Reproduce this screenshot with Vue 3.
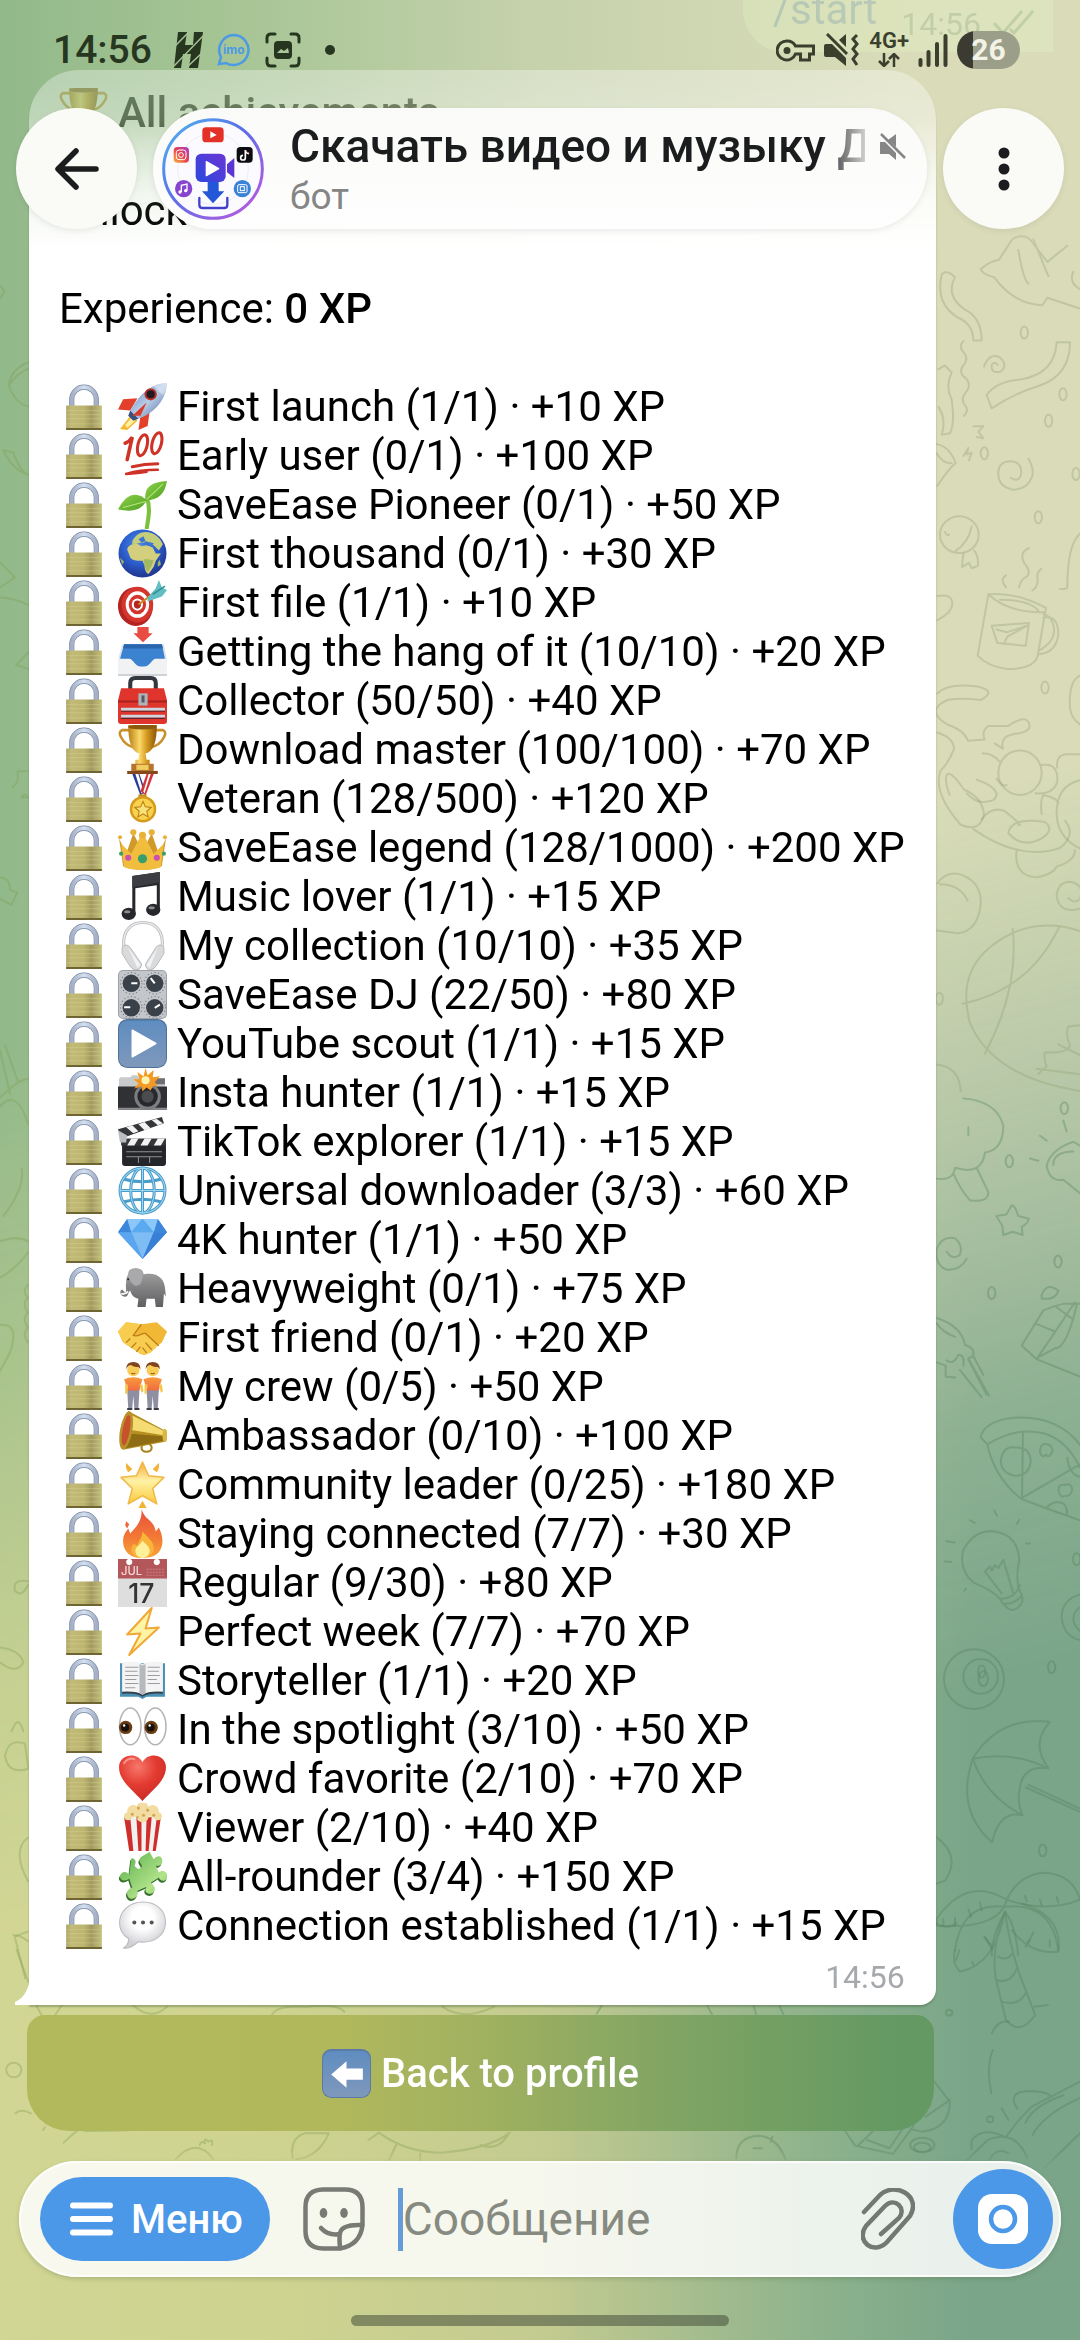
<template>
  <div class="screen">
    <div class="wallpaper" aria-hidden="true">
      <svg class="wallpaper__doodles" viewBox="0 0 1080 2340" preserveAspectRatio="xMaxYMin slice">
        <!-- right edge, upper part -->
        <g class="doodle doodle--light" transform="translate(900 250) scale(.3333 .5422)">
          <path d="M242 35q30-15 55-17l40-38q40-15 65 10l40 32 60-30M242 35q5 10 40 15 60 50 145 52l15-14 98 20M355 0q15 55 30 62M400-20l45 68M520 40q-15 20 20 32" />
          <path d="M125 45q15-10 40 5-30 35 30 60 50 15 50 57h-25q0-30-45-42-70-25-50-80z" />
          <path d="M190 168q-15 10 0 20 18 12 0 25t10 25q15 12-3 25t0 25q10 8-5 18" />
          <path d="M252 215q15-25 45-18 30 15 5 27-30 5-27-12 8-8 18 0" />
          <path d="M470 170h40q0 60-90 80-80 15-145 42l-15-25q30-25 100-28 105-10 110-69z" />
          <path d="M115 220l20-7 20 13q-20 25 0 50 10 45-5 62l-25 3q15-30-10-52" />
          <path d="M220 325l30 0-15 10 15 12-20-2M190 380l15-15-5 12 15-3-8 14" />
          <path d="M110 358q40 5 57 35-20 10-55 42M110 375q20 20 45 18" />
          <path d="M385 385q20 20 10 35-15 22-55 22-45-5-45-30t45-22q30 5 22 27-10 12-30 3" />
          <ellipse cx="178" cy="525" rx="58" ry="34" />
          <path d="M215 510q-10 30-48 45M190 560l-4 25 20-8 10 10 18-5q2-18-12-28M135 520q5 8 12 5" />
          <path d="M265 635q80-5 173 25l-25 88q-10 25-90 25-60-5-90-25zM265 635q60 35 170 33M300 645q90 0 115 20M430 678q45-5 45 30-5 35-62 38M430 672q25 2 32 25 5 25-45 42M275 693l112-5-10 42-85-5z M290 700l30 5 62-12-60 20-10 14" />
          <path d="M318 622q-20-15 0-22M357 622q5-15 25-20 12-10-10-25-15-20 15-27M397 628q20-8 15-25 0-10 12-15" />
          <path d="M112 818q30-20 120-13 60 8 10 25-60-5-100 0-70 20 0 45 50 10 62 30l50-2q-10-15 10-25h60q60-25 65 0 0 12-50 15-40 5-30 27l-25-10M112 890q50 10 50 30-15 25-40 40-25 40 60 100 60 15 70-20-5-30-60-45-45-40-53-25-5 10 10 35" />
          <ellipse cx="360" cy="964" rx="65" ry="41" />
          <path d="M248 928q30 0 50 15M290 975q15 15 30 12M425 950q50-5 47 30-10 25-65 22M472 955q-5-25 30-25h38M200 1002q30 20 60 15 30 0 30-15-10-15-60-25M245 1050q30-25 70-15 60 30 40 25M220 1068q140 60 260 35 50-25 15-50M325 1075q10-30 110-20 30 15-10 30-60 20-100-10M350 1105q-10 50 60 52 50-5 60-20 55-10 55-30" />
          <path d="M540 978q-70 10-70 60 0 45 70 66M425 1040q-5-25 5-35 40 5 45 15" />
          <path d="M112 1168q30-25 75-15 60 15 55 55-10 50-70 52l-62-5M120 1170q60 0 83 30" />
          <path d="M540 1215q-65 10-70-25 5-25 40-25 45 5 30 32-20 10-35-2" />
          <path d="M540 1256q-150-30-270 30-100 50-60 140 70 100 330 125M338 1252q20 110-83 230M188 1390q200-25 290-142M540 1430l-35 2q-10 15 5 35-5 15-75 13-5 10 5 25l-25 15M475 1465l65 20M410 1510l130 10" />
          <path d="M110 1502q70 5 72 50M480 625q10 2 22-2 0-80 38-100M112 638q45-5 45 15 0 15-45 30M540 785q-35 10-30 60 5 20 30 30" />
          <circle v-for="[x, y] in upperDots" :key="x + '-' + y" :cx="x" :cy="y" r="11" />
        </g>
        <!-- right edge, lower part -->
        <g class="doodle" transform="translate(900 1100) scale(.3333 .5422)">
          <path d="M110 145q50 5 55-20 80 15 90-28 55-5 55-50-20-45-120-50M160 135q20 30 50 50 55 5 55-15l-35-45M205 50v15" />
          <path d="M335 194q10 0 20 20l32 5q-5 10-22 15l3 15-30-6-28 6-3-17-18-18 30-3z" />
          <path d="M200 293q-20 22-60 20-35-8-30-38 15-25 55-20 25 12 15 30-20 12-40-5" />
          <path d="M110 402q75 15 85 50 30 5 25 20l-15 5 62 68M110 412q15 15 55 25M220 472l30 35M205 478l55 65M180 498l65 50M165 512l-28-2v-20l-27-6M140 480q20 10 35-10 20 0 15 20" />
          <path d="M540 172l-50-25q-40 5-50-25 10-30 80-45l20 7M460 120q0-25 60-25M490 38l10 20M420 66l20 9M390 108l25 4" />
          <path d="M430 388l-65 65 45 25 130 32M410 478l55-50 60-55M430 388q30-8 60-12h50M465 380l55 25M405 412l60 15M530 378q-30 80-65 80l-55 18M425 360q15-25 50-8-10 18-50 14z" />
          <path d="M242 622q10-30 100-36 130-5 198 50M262 635l-20-13M262 635q80-30 150-22 80 5 128 65M262 635q20 60 100 100 60 15 178 40M369 612l-3 122 174-62M302 667q5-30 45-26 45 0 45 26-5 26-45 26-40-3-45-26zM502 660q5 30 38 35M440 752q20-15 50-8 15 10 10 22" />
          <path d="M420 650q0-18 20-15 15 0 18 12-10 15-20 7-10 8-18-4zM475 720q0-12 20-10 20-5 22 10-8 12-22 10-15 5-20-10z" />
          <path d="M300 920q-20-15-80-30-45-25-30-60 30-35 85-35 80 5 83 55-10 20-3 50 20 20 8 30-30 25-63-10zM300 920q45 0 60-25M306 928q35 5 60-15M305 910l-50-40 15-10 5 8 10-10 10 5 15-15 30 62" />
          <path d="M210 775l14 5M283 757l8 10M358 774l-8 8M378 818h12M138 814l26 2M134 851l20 1M193 905l5-4" />
          <ellipse cx="222" cy="1068" rx="90" ry="55" />
          <ellipse cx="242" cy="1063" rx="52" ry="32" />
          <circle cx="245" cy="1054" r="11" />
          <circle cx="250" cy="1067" r="14" />
          <path d="M540 912q-55 10-55 42 5 35 55 42M540 935q-40 20 0 45" />
          <path d="M218 1215q80-80 232-68-60 40-5 85-75-5-85 35-10 30 8 52-70-10-92 50-110-60-58-154M218 1215q120-15 227 18M218 1215q40 70 150 104M378 1268l162 45M386 1263l154 44" />
          <path d="M110 1360q75 35 25 80l-25 5" />
          <path d="M110 1510q90-80 210-35-20 55-210 48zM320 1475q40-50 120-50 80 5 100 50-100 25-220 0M165 1568q20-90 150-80 140-10 160 80M315 1498q-40 40-40 80M315 1498q30 20 40 80" />
          <path d="M130 1510v12M165 1508v14M205 1492l8 14M240 1480l5 15M375 1468l5 10M420 1475l5 10M470 1470l5 10M255 1545l20 20M400 1535l-15 20" />
          <circle v-for="[x, y] in lowerDots" :key="x + '-' + y" :cx="x" :cy="y" r="11" />
        </g>
        <!-- palm, kite and small things around the button -->
        <g class="doodle" transform="translate(540 1900) scale(.3444 .3333)">
          <path d="M1350 35q-40 100-27 200l30 125q40 50 85-15l-30-80q-40-100-58-230M1330 170q25 15 42-10M1325 240q40 15 60-35M1340 305q50 15 70-25M1150 70q30 20 60 0M1205 150q-10 40 15 65 100-20 130-180M1400 10q120 40 105 145-80 10-135-65M1218 150l-10 30M1255 185l5 15M1290 110l20 25M1420 120l-10 20M1480 120v20M1435 320l40-5" />
          <path d="M1312 400q15-40 50-35M1315 450q-20 50-5 130M1340 625l20 35" />
          <path d="M1145 545l45 60q0 80-80 90l-35-8M1190 600l-70 50M885 692l30 45 110 25 60-85M925 735l45-45M950 720l65 25 45-70" />
          <ellipse cx="1110" cy="735" rx="35" ry="22" />
          <ellipse cx="1110" cy="742" rx="24" ry="14" />
          <path d="M570 775q0-65 65-68 55 5 78 72M620 745h25M675 710l-5 15" />
          <path d="M1568 545l-140 75q-50 50-75 92-70-35-100 10v25M1385 625q-30-50 35-52 40 0 60 12M1410 668q20-50 110-82M1430 705q30-60 135-110M1240 780l60-60q80-35 115 55M1305 780q20-40 55-20M1568 700l-110 110" />
          <circle cx="1188" cy="338" r="9" />
          <circle cx="1307" cy="658" r="9" />
          <path d="M165 340q10-15 15-25M500 345l-15-30M620 315l8 30M695 315l12 30" />
        </g>
        <g class="doodle doodle--warm" transform="translate(0 1900) scale(.3444 .3333)">
          <path d="M80 95l-37 15 30 125M105 315l15 30M180 315l-20 30M385 315q55 50 100 5M790 345q10-30 100-25 90-10 110 15M1285 320q60 45 150 0M45 640q15-15 45 0M185 728q60-60 60-35 60 0 130-2M125 690l5-8M510 778q60-70 110 0M580 735q5-15 15-5-5-20 10-5 15-10 10 10M850 775q-10-60 35-75h70q-30 70-95 78M1070 720l30-22q80 60 180 60 140-10 200-60M1150 735l-20 45M1220 760v20M1395 735q50 20 80-30" />
          <circle cx="40" cy="510" r="22" />
        </g>
        <!-- left edge -->
        <g class="doodle doodle--warm" transform="translate(0 200) scale(.3333 1.25)">
          <path d="M0 68l14 5-14 6M84 130q-50 5-58 18 20 15 58 17M84 135q-40 5-56 13M10 200l30 2q20 15 44 18-50-5-74-20M0 290l45 12-45 8M0 318q40 0 84 6M84 362l-35 10 35 3M38 470l15-5v-8h30M84 478q-10-5-20 0zM0 542q30 0 30 10l22 2-18 10-34-5M0 680l30 35M15 676l40 30M0 718q60-15 84-15M0 725q50-15 84 14M65 775q10 15-55 38M0 833q50-5 84 0M0 862q40-5 84-20M0 900q60-2 30 22l-30 15M84 868q-20 5 0 10-20 5 0 12-20 5 0 12-20 5 0 12M84 1105q-50-2-38 8 20 5 38-5M0 1158q60 2 70 12-20 10-70 0M15 1245q10-15 60-10l10 20q-60 5-70-10zM35 1225q20-15 35 0M84 1310q-50 10 0 35M40 1388q20 0 44 5M50 1400l34 25" />
        </g>
      </svg>
    </div>

    <svg class="sprites" aria-hidden="true">
      <defs>
        <linearGradient id="g-brass" x1="0" x2="1"><stop offset="0" stop-color="#aea567" /><stop offset=".15" stop-color="#c2bb78" /><stop offset=".5" stop-color="#bcb570" /><stop offset=".7" stop-color="#a09a60" /><stop offset="1" stop-color="#c6c07c" /></linearGradient>
        <linearGradient id="g-steel" x1="0" x2="1"><stop offset="0" stop-color="#a3b0c6" /><stop offset=".5" stop-color="#d5e0f2" /><stop offset="1" stop-color="#a3b0c6" /></linearGradient>
        <linearGradient id="g-gold" x1="0" x2="1"><stop offset="0" stop-color="#b97f14" /><stop offset=".4" stop-color="#fbd86a" /><stop offset=".65" stop-color="#d59a1f" /><stop offset="1" stop-color="#8a5509" /></linearGradient>
        <linearGradient id="g-blue" x1="0" y1="0" x2="0" y2="1"><stop offset="0" stop-color="#5f8dc0" /><stop offset="1" stop-color="#7f98bb" /></linearGradient>
        <linearGradient id="g-star" x1="0" y1="0" x2="0" y2="1"><stop offset="0" stop-color="#f4ab3d" /><stop offset=".45" stop-color="#fff2a6" /><stop offset="1" stop-color="#fbcb3c" /></linearGradient>
        <linearGradient id="g-fire" x1="0" y1="0" x2="0" y2="1"><stop offset="0" stop-color="#e8503a" /><stop offset=".6" stop-color="#f37b35" /><stop offset="1" stop-color="#f6a53a" /></linearGradient>
        <linearGradient id="g-leaf" x1="0" y1="0" x2="1" y2="1"><stop offset="0" stop-color="#8fd447" /><stop offset="1" stop-color="#4f9d26" /></linearGradient>
        <linearGradient id="g-puzzle" x1="0" y1="0" x2="1" y2="1"><stop offset="0" stop-color="#58b04b" /><stop offset=".7" stop-color="#b3e38a" /><stop offset="1" stop-color="#7cc263" /></linearGradient>
        <linearGradient id="g-shirt" x1="0" y1="0" x2="0" y2="1"><stop offset="0" stop-color="#f79a3c" /><stop offset="1" stop-color="#f06b40" /></linearGradient>
        <linearGradient id="g-hull" x1="0" y1="0" x2="1" y2="1"><stop offset="0" stop-color="#5b7fb8" /><stop offset=".5" stop-color="#b9cde8" /><stop offset="1" stop-color="#46649a" /></linearGradient>
        <linearGradient id="g-grey" x1="0" y1="0" x2="0" y2="1"><stop offset="0" stop-color="#a3a3a3" /><stop offset="1" stop-color="#5f5f62" /></linearGradient>
        <radialGradient id="g-ocean" cx=".45" cy=".35" r=".6"><stop offset="0" stop-color="#4d8de6" /><stop offset=".6" stop-color="#2c5fce" /><stop offset="1" stop-color="#223b98" /></radialGradient>
        <radialGradient id="g-bubble" cx=".5" cy=".35" r=".6"><stop offset=".4" stop-color="#fff" /><stop offset="1" stop-color="#cfcfd4" /></radialGradient>
        <radialGradient id="g-heart" cx=".4" cy=".25" r=".8"><stop offset="0" stop-color="#f7776b" /><stop offset=".5" stop-color="#e33b31" /><stop offset="1" stop-color="#c42a24" /></radialGradient>
        <linearGradient id="g-ring" x1="0" y1="0" x2="1" y2="1"><stop offset="0" stop-color="#4fb8f0" /><stop offset=".45" stop-color="#5a6fe8" /><stop offset="1" stop-color="#c656dd" /></linearGradient>
        <linearGradient id="g-cam" x1="0" y1="1" x2="1" y2="0"><stop offset="0" stop-color="#2a49dd" /><stop offset="1" stop-color="#6b35d6" /></linearGradient>
        <linearGradient id="g-insta" x1="0" y1="1" x2="1" y2="0"><stop offset="0" stop-color="#fbb13c" /><stop offset=".5" stop-color="#e8414e" /><stop offset="1" stop-color="#a63bd0" /></linearGradient>
      </defs>

      <symbol id="e-lock" viewBox="0 0 48 48">
        <path d="M12.500 26V17a12 12 0 0 1 24 0v9" fill="none" stroke="#76849c" stroke-width="5" />
        <path d="M12.500 26V17a12 12 0 0 1 24 0v9" fill="none" stroke="url(#g-steel)" stroke-width="3.800" />
        <path d="M7 23h35v23.500H7z" fill="url(#g-brass)" />
        <path d="M7 28h35M7 32h35M7 36h35M7 41h35" stroke="#d9cf8d" stroke-width=".6" opacity=".7" />
        <path d="M7 45h35v2H7z" fill="#6e6532" />
      </symbol>
      <symbol id="e-rocket" viewBox="0 0 48 48">
        <path d="M19 16 5 17 0 27l12 1zM31 29l-2 14-9 4 2-14z" fill="#e3402c" />
        <path d="M13 32 2 46l7 1 10-9z" fill="#f6b72e" /><path d="M13 35 7 42l2 3 8-7z" fill="#fff1a0" />
        <path d="M48 1C34 1 22 10 12 28l8 8C36 30 47 18 48 1z" fill="url(#g-hull)" />
        <path d="m12 28 8 8-5 2-5-5z" fill="#39517f" /><path d="M48 1c-5 0-9 1-13 3l9 9c3-4 4-8 4-12z" fill="#e8eef6" opacity=".55" />
        <circle cx="32" cy="12" r="6" fill="#b53028" /><circle cx="32" cy="12" r="4" fill="#1e1c22" />
        <path d="m14 33 14-13-6 13z" fill="#d73b2a" />
      </symbol>
      <symbol id="e-hundred" viewBox="0 0 48 48">
        <g fill="none" stroke="#cf3227" stroke-linecap="round">
          <path d="M7 12c3-1 5-3 7-6L9 28" stroke-width="3.500" /><ellipse cx="24" cy="14" rx="4.500" ry="10.500" transform="rotate(14 24 14)" stroke-width="3" />
          <ellipse cx="38" cy="12" rx="4.500" ry="10.500" transform="rotate(14 38 12)" stroke-width="3" />
          <path d="M14 35c8-2 16-3 25-3" stroke-width="3" /><path d="M8 42c10-3 20-4 31-4M8 42c6 0 13-1 20-2" stroke-width="2.500" />
        </g>
      </symbol>
      <symbol id="e-sprout" viewBox="0 0 48 48">
        <path d="M28 17c4 9 2 20 0 31" fill="none" stroke="#7cc13d" stroke-width="4" />
        <path d="M27 20C25 6 34 2 48 1c-2 12-8 19-21 19z" fill="url(#g-leaf)" /><path d="M28 20C20 11 8 12 0 29c12 2 22 2 28-9z" fill="url(#g-leaf)" />
        <path d="M28 19 44 4M27 21 5 27" stroke="#b6e67c" stroke-width="1" />
      </symbol>
      <symbol id="e-globe" viewBox="0 0 48 48">
        <circle cx="24" cy="24" r="23.500" fill="url(#g-ocean)" />
        <path d="M9 20c1-4 5-6 11-5l3 2 5-1 6 2 3 6 5 0-5 7-2 6-5 7c-3-1-4-5-4-8l-2-5c-4 0-9 1-12-3z" fill="#d3cf7c" />
        <path d="M14 12c3-6 8-9 13-9 8 0 14 5 17 12l-4 6-5-5-5-1-6-2-4 1-6 2z" fill="#c4cd79" /><path d="M20 10l5-3 2 5-4 1zM27 12l8 2-2 3-9-2z" fill="#3d74d4" />
        <path d="M39 33l2-3 1 5-3 2zM2 28l4 4-2 3z" fill="#9eb766" />
        <path d="M25 30c4-1 7 1 10 0l-2 6-4 6c-2-2-3-6-4-12z" fill="#8fae58" opacity=".7" />
      </symbol>
      <symbol id="e-dart" viewBox="0 0 48 48">
        <ellipse cx="17" cy="28" rx="17" ry="19" fill="#b42420" transform="rotate(-8 17 28)" />
        <ellipse cx="19" cy="26" rx="15.500" ry="17.500" fill="#d5352c" /><ellipse cx="19" cy="26" rx="11.500" ry="13" fill="#fff" />
        <ellipse cx="19" cy="26" rx="8.500" ry="9.500" fill="#d5352c" /><ellipse cx="19" cy="26" rx="5.500" ry="6" fill="#fff" /><ellipse cx="19" cy="26" rx="3.500" ry="4" fill="#b42420" />
        <path d="M20 26 38 13" stroke="#c98a20" stroke-width="2" /><path d="m29 19 8-9 3-8 3 7 5 3-5 6-14 5z" fill="#62bec2" /><path d="M34 16 46 8" stroke="#2f8e98" stroke-width="1.500" />
      </symbol>
      <symbol id="e-inbox" viewBox="0 0 48 48">
        <path d="M19 0h11v6h4L24.500 15 15 6h4z" fill="#e84c43" /><path d="M4 17h41l3 15v16H0V32z" fill="#dfe4ea" /><path d="M6 17h37l3 14-8 2-6 6H17l-6-6-9-2z" fill="#3b82d0" />
        <path d="M6 17h37l1 4H5z" fill="#2a66ad" /><path d="M0 31h11c4 0 5 8 13 8s9-8 13-8h11v17H0z" fill="#f1f2f4" /><path d="M0 46h48v2H0z" fill="#cfd3d8" />
      </symbol>
      <symbol id="e-toolbox" viewBox="0 0 48 48">
        <path d="M12 13V7q0-5 5-5h15q5 0 5 5v6" fill="none" stroke="#34383f" stroke-width="4" /><path d="M3 12h42l3 12v20q0 3-3 3H3q-3 0-3-3V24z" fill="#df352d" />
        <path d="M0 24h48v2H0z" fill="#a7211d" /><path d="M3 31h43v3H3zM3 38h43v3H3z" fill="#cfd5dc" /><path d="M3 34h43v1H3zM3 41h43v1H3z" fill="#60252a" /><path d="M20 17h9v12h-9z" fill="#aeb4ba" /><path d="M23 19h3v7h-3z" fill="#555b62" />
      </symbol>
      <symbol id="e-trophy" viewBox="0 0 48 48">
        <path d="M12 5H4q-4 2-1 7 4 8 13 10M36 5h8q4 2 1 7-4 8-13 10" fill="none" stroke="#c7902a" stroke-width="2.500" />
        <path d="M10 0h28c0 16-3 26-11 28l1 6h3v5H17v-5h3l1-6C13 26 10 16 10 0z" fill="url(#g-gold)" /><ellipse cx="24" cy="2" rx="14" ry="2.500" fill="#8b5a0e" />
        <path d="M13 38h22v7H13z" fill="#b8742c" /><path d="M9 45h30v3H9z" fill="#84481a" /><path d="M18 39h12v5H18z" fill="#f1cd60" />
      </symbol>
      <symbol id="e-medal" viewBox="0 0 48 48">
        <path d="M14 0h7l6 17-5 4z" fill="#2b3c96" /><path d="M17 0h3l5 17-2 2z" fill="#fff" /><path d="M35 0h-7l-6 17 5 4z" fill="#d2333b" /><path d="M32 0h-2l-5 17 1 2z" fill="#fff" />
        <path d="M20 20h8v4h-8z" fill="#c98d1a" /><circle cx="24.500" cy="34.500" r="13" fill="#d59b1d" /><circle cx="24.500" cy="34.500" r="10.500" fill="#f8d14d" />
        <path d="m24.500 27 2.300 5.200 5.700.5-4.300 3.800 1.300 5.500-5-2.900-5 2.900 1.300-5.500-4.300-3.800 5.700-.5z" fill="#fae27a" stroke="#b67b12" />
      </symbol>
      <symbol id="e-crown" viewBox="0 0 48 48">
        <path d="M1 15l7 15 7-20 9 18 9-18 7 20 7-15-4 27c-8 5-31 5-38 0z" fill="#d09a2b" /><path d="M3 20l10 10 11-21 11 21 10-10-3 23c-8 4-29 4-36 0z" fill="#f0bd3d" />
        <g fill="#e8b23a"><circle cx="15" cy="9" r="3" /><circle cx="33" cy="9" r="3" /><circle cx="2" cy="14" r="2" /><circle cx="46" cy="14" r="2" /><circle cx="24" cy="12" r="3.500" /></g>
        <circle cx="24" cy="35" r="4.500" fill="#35a06c" /><circle cx="10" cy="34" r="3" fill="#cf4fb0" /><circle cx="38" cy="34" r="3" fill="#cf4fb0" /><circle cx="3" cy="30" r="2" fill="#35a06c" /><circle cx="45" cy="30" r="2" fill="#35a06c" />
      </symbol>
      <symbol id="e-notes" viewBox="0 0 48 48">
        <path d="M14 4 41 0v38h-3V13l-21 3v26h-3z" fill="#26282c" /><path d="M14 4 41 0v10L14 15z" fill="#3b3d42" /><ellipse cx="10.500" cy="41" rx="7" ry="6" fill="#26282c" /><ellipse cx="34.500" cy="37" rx="7" ry="6" fill="#26282c" />
        <ellipse cx="9" cy="39" rx="3" ry="1.500" fill="#8b8e95" /><ellipse cx="33" cy="35" rx="3" ry="1.500" fill="#8b8e95" />
      </symbol>
      <symbol id="e-headphones" viewBox="0 0 48 48">
        <path d="M6 28C3 8 14 1.500 24.500 1.500S46 8 43 28" fill="none" stroke="#b9babd" stroke-width="3" /><path d="M6 28C3 8 14 1.500 24.500 1.500S46 8 43 28" fill="none" stroke="#e8e9eb" stroke-width="1.500" />
        <path d="M4 26q4-5 8 0l11 16q0 6-6 6-4-1-6-5L4 32z" fill="#d9dadc" stroke="#b0b1b4" stroke-width=".8" /><path d="M45 26q-4-5-8 0L27 42q0 6 5 6 4-1 6-5l7-11z" fill="#d9dadc" stroke="#b0b1b4" stroke-width=".8" /><path d="m10 26 12 17-3 3zM39 26 28 43l3 3z" fill="#f3f3f4" />
      </symbol>
      <symbol id="e-knobs" viewBox="0 0 48 48">
        <rect width="48" height="48" rx="5" fill="#9da1a7" /><rect x="1" y="1" width="46" height="46" rx="4" fill="#c3c6ca" />
        <g fill="none" stroke="#6d7177" stroke-width="1" stroke-dasharray="1 2.500"><circle cx="13" cy="13" r="10.500" /><circle cx="36" cy="13" r="10.500" /><circle cx="13" cy="36.500" r="10.500" /><circle cx="36" cy="36.500" r="10.500" /></g>
        <g fill="#3b4148"><circle cx="13" cy="13" r="8.500" /><circle cx="36" cy="13" r="8.500" /><circle cx="13" cy="37" r="8.500" /><circle cx="36" cy="37" r="8.500" /></g>
        <path d="M13 13h6M36 13l-4-5M12 36.500H6M36 37l5-3" stroke="#fff" stroke-width="2" />
      </symbol>
      <symbol id="e-play" viewBox="0 0 48 48">
        <rect width="48" height="48" rx="9" fill="#4f7298" /><rect x="1" y="1.500" width="46" height="45.500" rx="8" fill="url(#g-blue)" /><path d="M14 11v26l23-13z" fill="#fff" stroke="#fff" stroke-width="1.500" stroke-linejoin="round" />
      </symbol>
      <symbol id="e-camera" viewBox="0 0 48 48">
        <path d="M2 9h10l2-2h5l3 4h24v8H1v-8z" fill="#c9cacb" /><path d="M0 18h48v23H0z" fill="#303134" /><path d="M35 10h11v6H35z" fill="#6d6f72" /><path d="M0 39h48v2H0z" fill="#8b8c8e" />
        <circle cx="29" cy="28" r="13" fill="#7b7d80" /><circle cx="29" cy="28" r="10" fill="#27282b" /><circle cx="29" cy="28" r="6" fill="#4a4c50" />
        <path d="m27 0 2 7 6-5-1 7 7-1-5 6 3 3-5 1-2 4-4-3-4 4-1-5-7 2 4-5-5-4 6 0-2-7 6 4z" fill="#f39a24" /><circle cx="27" cy="12" r="4" fill="#fff3b0" />
      </symbol>
      <symbol id="e-clapper" viewBox="0 0 48 48">
        <path d="M4 26h43v19q0 3-3 3H7q-3 0-3-3z" fill="#25262a" /><path d="M0 12 43 0l2 6L3 21z" fill="#35363a" /><path d="m8 10 7 6 5-2-6-6zM20 7l6 6 6-2-6-6zM33 3l6 5 5-2-6-4z" fill="#f2f2f2" />
        <path d="M3 21h44v7H3z" fill="#35363a" /><path d="m13 21-4 7h7l4-7zM26 21l-4 7h7l4-7zM39 21l-4 7h7l4-7z" fill="#f2f2f2" /><path d="M0 13l9 5-1 7H2z" fill="#bcbdbf" /><path d="M8 34h35M8 39h35M20 39v6M31 39v6" stroke="#8f9094" stroke-width="1" />
      </symbol>
      <symbol id="e-web" viewBox="0 0 48 48">
        <g fill="none" stroke="#4a9cc9" stroke-width="3"><circle cx="24" cy="24" r="22" /><ellipse cx="24" cy="24" rx="11.500" ry="22" /><path d="M24 2v44M2 24h44M6 13q18 5 36 0M6 35q18-5 36 0" /></g>
        <g fill="none" stroke="#9fd6f0" stroke-width="1"><circle cx="24" cy="24" r="22" /><ellipse cx="24" cy="24" rx="11.500" ry="22" /><path d="M24 2v44M2 24h44" /></g>
      </symbol>
      <symbol id="e-gem" viewBox="0 0 48 48">
        <path d="M9 4h30l9 13-24 26L0 17z" fill="#4a9ceb" /><path d="M9 4 0 17h13zM39 4l9 13H35z" fill="#3c86dc" /><path d="M9 4h15L13 17zM39 4H24l11 13z" fill="#8bc7f8" /><path d="M24 4 13 17h22z" fill="#5aaaf0" /><path d="M13 17h22L24 43z" fill="#7ebcf4" /><path d="M0 17h13l11 26z" fill="#5aa5ee" /><path d="M48 17H35L24 43z" fill="#3a7fd6" />
      </symbol>
      <symbol id="e-elephant" viewBox="0 0 48 48">
        <path d="M20 11c8-2 17-3 22 3 5 5 4 13 5 18l-2-3-1 13h-7l-1-8h-8l-1 8h-8l1-8c-5-1-7-4-8-8-2 2-2 6-5 6-5 0-6-6-3-7l3 3c2-2 0-6 1-10 0-8 5-12 9-13 5-1 8 1 8 6z" fill="url(#g-grey)" />
        <path d="M11 6c7-5 15-1 13 8-1 8-7 9-10 5-3-3-6-7-3-13z" fill="#a9a9ab" /><path d="M3 29c3 1 5 0 7-2" stroke="#eee" stroke-width="2" fill="none" /><circle cx="10" cy="15" r="1" fill="#222" />
      </symbol>
      <symbol id="e-handshake" viewBox="0 0 48 48">
        <path d="M0 18 8 9l15 2 15-2 10 9-5 11-12 9c-4 5-9 3-12 0L5 29z" fill="#f1b835" /><path d="m0 18 8-9 15 2-9 11c5 3 9-2 13-2l12 12-7 7c-4 2-10 2-13-1L5 29z" fill="#f8cc4f" />
        <path d="m23 11-8 11c5 2 8-3 12-2l13 12M8 29l4-4M13 34l5-5M18 38l4-5M33 36l-6-7M28 39l-4-5" fill="none" stroke="#bd7f1c" stroke-width="1.300" />
      </symbol>
      <symbol id="e-friends" viewBox="0 0 48 48">
        <g id="friend"><path d="M9 27h12l-1 18h-4l-1-12-1 12h-4z" fill="#8e90a2" /><path d="M6 17q9-4 18 0l-2 6-1 5H9l-1-5z" fill="url(#g-shirt)" /><path d="M7 22h3l-1 9H7zM21 22h3l1 7-2 1z" fill="#f6c64c" /><circle cx="15" cy="8" r="6" fill="#f8cd55" /><path d="M8 7q0-7 7-7t7 7l-2-2q-5 0-7-2-3 0-5 4z" fill="#80451f" /><path d="M13 11q2 1 4 0" stroke="#9b5a20" fill="none" /><path d="M9 45h5v2H9zM16 45h5v2h-5z" fill="#3c3a42" /></g>
        <use href="#friend" x="19" />
      </symbol>
      <symbol id="e-megaphone" viewBox="0 0 48 48">
        <ellipse cx="28" cy="36" rx="5" ry="4" fill="none" stroke="#a8811c" stroke-width="2" /><path d="M10 0 46 19v11L5 38z" fill="#b58f22" /><path d="m13 4 33 16v4L10 18z" fill="#f5dc72" /><path d="M9 22l37 3v4L5 37z" fill="#8d6c14" />
        <ellipse cx="8" cy="19" rx="6" ry="19" fill="#b8912b" transform="rotate(10 8 19)" /><ellipse cx="8" cy="19" rx="3.500" ry="15" fill="#c5522a" transform="rotate(10 8 19)" /><ellipse cx="46" cy="24" rx="2.500" ry="6.500" fill="#d9b743" />
      </symbol>
      <symbol id="e-star" viewBox="0 0 48 48">
        <path d="m24 2 6 13.500 15 1.500-11 11 4 15-14-8-14 8 4-15L3 17l15-1.500z" fill="url(#g-star)" stroke="#f2b847" stroke-width="1.500" stroke-linejoin="round" /><path d="M8 3l6 6-4 3q-3-4-2-9zM40 3l-6 6 4 3q3-4 2-9zM24 40l4 7h-8z" fill="#f2b233" />
      </symbol>
      <symbol id="e-fire" viewBox="0 0 48 48">
        <path d="M23 0c3 11 12 10 14 22l3-4c4 8 5 16 1 23-3 5-9 7-17 7C10 48 5 40 5 31c0-6 3-9 5-12l2 5C18 17 24 12 23 0zM8 12l3 3-2 4-2-3z" fill="url(#g-fire)" /><path d="M24 22c5 6 12 10 11 18-1 5-6 8-11 8s-11-3-11-9l2-5 4 2c1-5 5-8 5-14z" fill="#f9b53b" /><path d="M24 31c4 4 7 6 7 10s-3 7-7 7-7-3-7-7 4-5 7-10z" fill="#fff09a" />
      </symbol>
      <symbol id="e-calendar" viewBox="0 0 48 48">
        <path d="M0 1h48v47H0z" fill="#dedede" /><path d="M0 1h48v19H0z" fill="#b4575b" /><circle cx="11" cy="4" r="3" fill="#fff" /><circle cx="38" cy="4" r="3" fill="#fff" /><path d="M10 0h2v4h-2zM37 0h2v4h-2z" fill="#fff" />
        <path d="M28 11h17M28 14h17M28 17h17" stroke="#c98083" stroke-dasharray="2 1" /><text x="3" y="17" class="sym sym--small" fill="#f6d9d9">JUL</text><text x="10" y="44" class="sym" fill="#333">17</text>
      </symbol>
      <symbol id="e-bolt" viewBox="0 0 48 48"><path d="M33 1 9 27l13-1-11 21 29-27-13 1z" fill="#fff3a6" stroke="#f0a836" stroke-width="2" stroke-linejoin="round" /></symbol>
      <symbol id="e-book" viewBox="0 0 48 48">
        <path d="M2 7h44v33H28l-4 2-4-2H2z" fill="#4a90b4" /><path d="M4 34q14-1 20 4 6-5 20-4v3q-14-1-20 3-6-4-20-3z" fill="#34404a" /><path d="M4 6q14-2 20 2 6-4 20-2v29q-14-1-20 3-6-4-20-3z" fill="#f4f4f5" />
        <path d="M21 8q3 0 3 2 0-2 3-2v28l-3 2-3-2z" fill="#b5b8bd" /><path d="M7 11h13M7 15h12M7 19h13M7 23h11M7 27h13M7 31h10M29 11h12M29 15h11M29 19h12M29 23h9M29 27h12" stroke="#9b9ca0" stroke-width="1" />
      </symbol>
      <symbol id="e-eyes" viewBox="0 0 48 48">
        <g stroke="#b4b4b6" stroke-width="1.500" fill="#fff"><ellipse cx="12" cy="21" rx="10.500" ry="18" /><ellipse cx="36.500" cy="21" rx="10.500" ry="18" /></g>
        <circle cx="7.500" cy="22" r="6.500" fill="#6b3d12" /><circle cx="32.500" cy="22" r="6.500" fill="#6b3d12" /><circle cx="7" cy="22" r="4" fill="#17100b" /><circle cx="32" cy="22" r="4" fill="#17100b" /><circle cx="6" cy="20" r="1.200" fill="#fff" /><circle cx="31" cy="20" r="1.200" fill="#fff" />
      </symbol>
      <symbol id="e-heart" viewBox="0 0 48 48"><path d="M24 46C14 35 1 26 1 13 1 1 18-3 24 8 30-3 47 1 47 13c0 13-13 22-23 33z" fill="url(#g-heart)" /><path d="M6 9q4-6 10-4" stroke="#ffb1a8" stroke-width="2" fill="none" stroke-linecap="round" opacity=".7" /></symbol>
      <symbol id="e-popcorn" viewBox="0 0 48 48">
        <path d="M6 14h36l-5 33H11z" fill="#f3f1ef" /><path d="M6 14h6l3 33h-4zM18 14h5v33h-3zM28 14h5l-3 33h-3zM38 14h4l-5 33h-3z" fill="#cf2e2c" />
        <g fill="#f2dca2"><circle cx="24" cy="5" r="6" /><circle cx="15" cy="8" r="6" /><circle cx="34" cy="8" r="6" /><circle cx="10" cy="13" r="4" /><circle cx="39" cy="13" r="4" /><circle cx="24" cy="13" r="6" /></g>
        <g fill="#d3a750"><circle cx="20" cy="5" r="1.500" /><circle cx="29" cy="7" r="1.500" /><circle cx="14" cy="11" r="1.500" /><circle cx="35" cy="12" r="1.500" /><circle cx="25" cy="12" r="1.500" /><circle cx="19" cy="14" r="1.200" /></g>
      </symbol>
      <symbol id="e-puzzle" viewBox="0 0 48 48">
        <path d="M12 7c5 0 5 5 3 7 4 7 10 2 6-2-2-3-1-5 2-7l7-4 4 7c5-6 10-1 8 4-2 3-4 3-6 2l3 7c5-4 10 1 8 6-3 4-7 2-8-1l-8 5c5 3 6 10 0 11-6 0-6-5-4-7l-9 4c2 5-4 10-8 7-5-5 0-10 3-10l-3-9c-5 4-10 1-9-3 3-6 8-3 9 0z" transform="translate(0 1)" fill="#39712f" />
        <path d="M13 6c5 0 5 5 3 7 4 7 10 2 6-2-2-3-1-5 2-7l7-4 4 7c5-6 10-1 8 4-2 3-4 3-6 2l3 7c5-4 10 1 8 6-3 4-7 2-8-1l-8 5c5 3 6 10 0 11-6 0-6-5-4-7l-9 4c2 5-4 10-8 7-5-5 0-10 3-10l-3-9c-5 4-10 1-9-3 3-6 8-3 9 0z" fill="url(#g-puzzle)" />
      </symbol>
      <symbol id="e-speech" viewBox="0 0 48 48">
        <path d="M24.500 1C11 1 1.500 10 1.500 21c0 8 4 13 9 16 0 4-2 7-5 9 6 1 11-3 14-6 15 2 27-6 27-19C47 10 38 1 24.500 1z" fill="url(#g-bubble)" stroke="#b9b9be" /><circle cx="16" cy="21" r="2" fill="#555" /><circle cx="24.500" cy="21" r="2" fill="#555" /><circle cx="33" cy="21" r="2" fill="#555" />
      </symbol>
      <symbol id="e-left" viewBox="0 0 48 48">
        <rect width="48" height="48" rx="9" fill="#5b7ba6" /><rect x="1" y="2" width="46" height="45" rx="8" fill="url(#g-blue)" /><path d="M9 25 24 12v7h16v11H24v8z" fill="#fff" />
      </symbol>
    </svg>

    <header class="top">
      <div class="status">
        <div class="status__left">
          <span class="status__time">14:56</span>
          <svg width="29" height="36" viewBox="0 0 29 36"><path d="M4 0h9l-2 13h8l1-13h9l-5 36h-9l2-14H9L7 36H0z" fill="#27361f" /><path d="M0 15 15 0M0 34 29 4M12 36 29 20" stroke="#a5c497" stroke-width="1.500" /></svg>
          <svg width="34" height="34" viewBox="0 0 34 34"><path d="M17 2a15 15 0 1 1-8 28l-7 1 2-7A15 15 0 0 1 17 2z" fill="none" stroke="#4b9be4" stroke-width="2.500" /><text x="6" y="20.500" class="imo">imo</text></svg>
          <svg width="36" height="36" viewBox="0 0 36 36"><path d="M2 10V6q0-4 4-4h4M26 2h4q4 0 4 4v4M34 26v4q0 4-4 4h-4M10 34H6q-4 0-4-4v-4" fill="none" stroke="#27361f" stroke-width="3" stroke-linecap="round" /><rect x="9" y="9" width="18" height="18" rx="4" fill="#27361f" /><path d="m12 21 4-4 3 2 4-3 1 5z" fill="#a9c79a" /></svg>
          <svg width="30" height="10" viewBox="0 0 30 10"><circle cx="15" cy="5" r="5" fill="#27361f" /></svg>
        </div>
        <div class="status__right">
          <svg width="39" height="23" viewBox="0 0 39 23"><path d="M11 2a9.500 9.500 0 1 0 8.500 13h5v6h9v-6h4V7H19.500A9.500 9.500 0 0 0 11 2z" fill="none" stroke="#3b3f2e" stroke-width="3" /><circle cx="11" cy="11.500" r="3.500" fill="#3b3f2e" /></svg>
          <svg width="36" height="34" viewBox="0 0 36 34"><path d="M0 13q0-2 2-2h6l14 14v8l-11-9H2q-2 0-2-2zM22 1v13l-7-7z" fill="#3b3f2e" /><path d="m3 1 20 20" stroke="#3b3f2e" stroke-width="3" /><path d="m33 2-4 4 4 5-4 5 4 5-4 5 4 6" fill="none" stroke="#3b3f2e" stroke-width="3" /></svg>
          <div class="network">
            <span>4G+</span>
            <svg width="22" height="14" viewBox="0 0 22 14"><path d="M6 0v12M1 8l5 5 5-5M16 14V2M11 6l5-5 5 5" fill="none" stroke="#3b3f2e" stroke-width="2.500" /></svg>
          </div>
          <svg width="30" height="33" viewBox="0 0 30 33"><path d="M2.500 26v5M10.500 18v13M19 10v21M27.500 2v29" stroke="#3b3f2e" stroke-width="4" stroke-linecap="round" /></svg>
          <span class="battery">26</span>
        </div>
      </div>

      <nav class="nav">
        <button class="nav__round" aria-label="Назад">
          <svg width="44" height="44" viewBox="0 0 44 44"><path d="M41 22H4M21 4 3 22l18 18" fill="none" stroke="#1b1c1e" stroke-width="5.500" stroke-linecap="round" stroke-linejoin="round" /></svg>
        </button>
        <div class="peer">
          <svg class="peer__avatar" viewBox="67 48 306 312">
            <circle cx="220" cy="204" r="148" fill="#fbfbff" stroke="url(#g-ring)" stroke-width="9" />
            <circle cx="220" cy="204" r="106" fill="none" stroke="#ececf5" stroke-width="3" />
            <rect x="188" y="79" width="64" height="45" rx="11" fill="#e33127" /><path d="M212 91v21l19-10z" fill="#fff" />
            <rect x="102" y="138" width="46" height="47" rx="11" fill="url(#g-insta)" /><rect x="110" y="147" width="29" height="29" rx="8" fill="none" stroke="#fff" stroke-width="3" /><circle cx="124" cy="162" r="7" fill="none" stroke="#fff" stroke-width="3" />
            <rect x="291" y="138" width="48" height="47" rx="11" fill="#0c0d12" /><path d="M317 147v23a7 7 0 1 1-7-7M317 148q2 9 11 10" fill="none" stroke="#fff" stroke-width="5" /><path d="M320 150q3 6 9 6" stroke="#ee3b5c" stroke-width="2" fill="none" />
            <circle cx="132" cy="263" r="26" fill="#8744cf" /><path d="M125 273v-20l17-4v20" fill="none" stroke="#fff" stroke-width="4" /><circle cx="121" cy="273" r="5" fill="#fff" /><circle cx="138" cy="269" r="5" fill="#fff" />
            <circle cx="308" cy="263" r="26" fill="#3a82d6" /><rect x="294" y="251" width="28" height="24" rx="4" fill="none" stroke="#fff" stroke-width="3" /><rect x="302" y="257" width="12" height="12" fill="none" stroke="#fff" stroke-width="3" />
            <path d="M204 235h33v36h17l-34 36-33-36h17z" fill="#2457d8" />
            <rect x="168" y="158" width="90" height="85" rx="17" fill="url(#g-cam)" /><path d="m262 190 22-19v60l-22-17z" fill="#5b35d2" /><path d="M200 182v42l37-21z" fill="#fff" stroke="#fff" stroke-width="4" stroke-linejoin="round" />
            <path d="M179 291v20q0 10 10 10h64q10 0 10-10v-20" fill="none" stroke="#4341c9" stroke-width="7" stroke-linecap="round" />
          </svg>
          <div class="peer__info">
            <div class="peer__title"><span class="peer__name">Скачать видео и музыку Д</span>
              <svg width="28" height="28" viewBox="0 0 28 28"><path d="M1 10h5l11 11v7l-7-6H1zM17 2v13L9 8z" fill="#858685" /><path d="m2 2 24 24" stroke="#858685" stroke-width="2.500" /></svg>
            </div>
            <span class="peer__status">бот</span>
          </div>
        </div>
        <button class="nav__round" aria-label="Меню чата">
          <svg width="12" height="44" viewBox="0 0 12 44"><circle cx="6" cy="6" r="5.500" fill="#1b1c1e" /><circle cx="6" cy="22" r="5.500" fill="#1b1c1e" /><circle cx="6" cy="38" r="5.500" fill="#1b1c1e" /></svg>
        </button>
      </nav>
    </header>

    <main class="chat">
      <div class="outgoing">
        <a class="outgoing__command" href="#start">/start</a>
        <span class="outgoing__time">14:56</span>
        <svg width="42" height="38" viewBox="0 0 42 38"><path d="m1 18 9 10L29 6M17 24l4 4L40 6" fill="none" stroke="#8fb87a" stroke-width="3" /></svg>
      </div>

      <div class="incoming">
        <article class="message">
          <p class="line line--title"><svg class="emoji"><use href="#e-trophy" /></svg>All achievements</p>
          <p class="line line--gap">Unlocked:</p>
          <p class="line line--gap line--last">Experience:&nbsp;<b>0 XP</b></p>
          <ul class="achievements">
            <li v-for="item in achievements" :key="item.name" class="line">
              <svg class="emoji"><use href="#e-lock" /></svg>
              <svg class="emoji"><use :href="'#e-' + item.icon" /></svg>
              {{ item.name }} ({{ item.progress }}) · +{{ item.xp }} XP
            </li>
          </ul>
          <time class="message__time">14:56</time>
          <svg class="message__tail" viewBox="0 0 16 32"><path d="M16 0q0 22-15 29v3h15z" fill="#fff" /></svg>
        </article>
        <button class="reply"><svg class="emoji"><use href="#e-left" /></svg>Back to profile</button>
      </div>
    </main>

    <footer class="bottom">
      <div class="composer">
        <button class="composer__menu">
          <svg width="43" height="34" viewBox="0 0 43 34"><path d="M3 3.500h37M3 17h37M3 30.500h37" stroke="#fff" stroke-width="6" stroke-linecap="round" /></svg>
          Меню
        </button>
        <button class="composer__icon" aria-label="Стикеры">
          <svg width="62" height="64" viewBox="0 0 62 64"><path d="M20 2.500h22q17.500 0 17.500 18v18Q57 58 37 61.500H20Q2.500 61 2.500 44V20Q2.500 3 20 2.500z" fill="none" stroke="#777b74" stroke-width="4.500" /><path d="M59 38q-20-1-22 8-1 5 0 15M18 41q7 8 19 6" fill="none" stroke="#777b74" stroke-width="4.500" stroke-linecap="round" /><ellipse cx="20.500" cy="26" rx="3.800" ry="5" fill="#777b74" /><ellipse cx="41" cy="26" rx="3.800" ry="5" fill="#777b74" /></svg>
        </button>
        <span class="composer__caret"></span>
        <input v-model="draft" class="composer__input" type="text" placeholder="Сообщение" aria-label="Сообщение" />
        <button class="composer__icon" aria-label="Прикрепить">
          <svg width="54" height="62" viewBox="0 0 54 62"><path d="M3 24 19 7C34-7 61 8 49 28L26 54C13 68-6 53 5 38L24 18C34 8 46 21 38 30L20 46" fill="none" stroke="#737872" stroke-width="4.500" stroke-linecap="round" /></svg>
        </button>
        <button class="composer__camera" aria-label="Видеосообщение">
          <svg width="50" height="50" viewBox="0 0 50 50"><rect width="50" height="50" rx="14" fill="#fff" /><circle cx="25" cy="25" r="12" fill="none" stroke="#4b97e8" stroke-width="4.500" /></svg>
        </button>
      </div>
      <div class="home"></div>
    </footer>
  </div>
</template>

<script setup>
import { ref } from "vue";

const draft = ref("");

const achievements = [
  { icon: "rocket", name: "First launch", progress: "1/1", xp: 10 },
  { icon: "hundred", name: "Early user", progress: "0/1", xp: 100 },
  { icon: "sprout", name: "SaveEase Pioneer", progress: "0/1", xp: 50 },
  { icon: "globe", name: "First thousand", progress: "0/1", xp: 30 },
  { icon: "dart", name: "First file", progress: "1/1", xp: 10 },
  { icon: "inbox", name: "Getting the hang of it", progress: "10/10", xp: 20 },
  { icon: "toolbox", name: "Collector", progress: "50/50", xp: 40 },
  { icon: "trophy", name: "Download master", progress: "100/100", xp: 70 },
  { icon: "medal", name: "Veteran", progress: "128/500", xp: 120 },
  { icon: "crown", name: "SaveEase legend", progress: "128/1000", xp: 200 },
  { icon: "notes", name: "Music lover", progress: "1/1", xp: 15 },
  { icon: "headphones", name: "My collection", progress: "10/10", xp: 35 },
  { icon: "knobs", name: "SaveEase DJ", progress: "22/50", xp: 80 },
  { icon: "play", name: "YouTube scout", progress: "1/1", xp: 15 },
  { icon: "camera", name: "Insta hunter", progress: "1/1", xp: 15 },
  { icon: "clapper", name: "TikTok explorer", progress: "1/1", xp: 15 },
  { icon: "web", name: "Universal downloader", progress: "3/3", xp: 60 },
  { icon: "gem", name: "4K hunter", progress: "1/1", xp: 50 },
  { icon: "elephant", name: "Heavyweight", progress: "0/1", xp: 75 },
  { icon: "handshake", name: "First friend", progress: "0/1", xp: 20 },
  { icon: "friends", name: "My crew", progress: "0/5", xp: 50 },
  { icon: "megaphone", name: "Ambassador", progress: "0/10", xp: 100 },
  { icon: "star", name: "Community leader", progress: "0/25", xp: 180 },
  { icon: "fire", name: "Staying connected", progress: "7/7", xp: 30 },
  { icon: "calendar", name: "Regular", progress: "9/30", xp: 80 },
  { icon: "bolt", name: "Perfect week", progress: "7/7", xp: 70 },
  { icon: "book", name: "Storyteller", progress: "1/1", xp: 20 },
  { icon: "eyes", name: "In the spotlight", progress: "3/10", xp: 50 },
  { icon: "heart", name: "Crowd favorite", progress: "2/10", xp: 70 },
  { icon: "popcorn", name: "Viewer", progress: "2/10", xp: 40 },
  { icon: "puzzle", name: "All-rounder", progress: "3/4", xp: 150 },
  { icon: "speech", name: "Connection established", progress: "1/1", xp: 15 },
];

// small pebbles scattered over the wallpaper
const upperDots = [[373, 152], [489, 266], [446, 315], [253, 375], [415, 493], [435, 807], [118, 1381], [528, 413]];
const lowerDots = [[493, 15], [328, 113], [474, 298], [275, 356], [530, 847], [455, 1046], [428, 1384]];
</script>

<style>
body {
  margin: 0;
}
</style>

<style scoped>
.screen {
  position: relative;
  display: flex;
  flex-direction: column;
  min-height: 100vh;
  overflow: hidden;
  font-family: Roboto, "Noto Sans", sans-serif;
  font-size: 42px;
  line-height: 49px;
  color: #000;
}

button {
  border: none;
  padding: 0;
  font: inherit;
  cursor: pointer;
}

svg {
  flex-shrink: 0;
}

.sprites {
  position: absolute;
  width: 0;
  height: 0;
}

.sym {
  font: 500 26px Inter, sans-serif;
}

.sym--small {
  font: 500 11px Inter, sans-serif;
}

/* wallpaper */
.wallpaper {
  position: absolute;
  inset: 0;
  background: linear-gradient(90deg, #92b98a 0%, #a5c494 20%, #c6d2ac 50%, #dadcb9 85%);
}

.wallpaper::before {
  content: "";
  position: absolute;
  inset: 0;
  background: linear-gradient(90deg, #d2d694 0%, #ced38f 25%, #c4cb90 50%, #8db28c 76%, #7aa589 90%);
  mask-image: linear-gradient(165deg, transparent 40%, #0006 53%, #000c 64%, #000 74%);
}

.wallpaper__doodles {
  position: absolute;
  inset: 0;
  width: 100%;
  height: 100%;
  mask-image: linear-gradient(to bottom, transparent 190px, #000 250px, #000 2150px, transparent 2170px);
}

.doodle {
  fill: none;
  stroke: #4f7f5c;
  stroke-opacity: 0.34;
  stroke-width: 2;
  stroke-linejoin: round;
  stroke-linecap: round;
}

.doodle--light {
  stroke: #8f9f70;
}

.doodle--warm {
  stroke: #7f9a4e;
}

.doodle * {
  vector-effect: non-scaling-stroke;
}

/* status bar and header */
.top {
  position: absolute;
  top: 0;
  left: 0;
  right: 0;
  z-index: 2;
}

.status {
  display: flex;
  justify-content: space-between;
  align-items: center;
  height: 100px;
  padding: 0 60px 0 53px;
  margin-bottom: 8px;
}

.status__left {
  display: flex;
  align-items: center;
  gap: 14px;
}

.status__right {
  display: flex;
  align-items: center;
  gap: 9px;
}

.status__time {
  margin-right: 8px;
  font-size: 39px;
  font-weight: 500;
  color: #27361f;
}

.imo {
  font: 700 12px Inter, sans-serif;
  fill: #4b9be4;
}

.network {
  display: flex;
  flex-direction: column;
  align-items: center;
  gap: 4px;
  font-size: 22px;
  font-weight: 600;
  line-height: 16px;
  color: #3b3f2e;
}

.battery {
  width: 63px;
  border-radius: 19px;
  background: linear-gradient(90deg, #3b3b31 16px, #9b9e88 16px);
  font-size: 30px;
  font-weight: 700;
  line-height: 38px;
  text-align: center;
  color: #f2f3e6;
}

.nav {
  display: flex;
  gap: 16px;
  padding: 0 16px;
}

.nav__round {
  display: flex;
  flex-shrink: 0;
  align-items: center;
  justify-content: center;
  width: 121px;
  height: 121px;
  border-radius: 50%;
  background: #fafbf7;
  box-shadow: 0 2px 6px rgba(0, 0, 0, 0.08);
}

.peer {
  display: flex;
  flex: 1;
  align-items: center;
  min-width: 0;
  height: 121px;
  padding: 0 20px 0 9px;
  box-sizing: border-box;
  border-radius: 61px;
  background: linear-gradient(to bottom, #fafbf8, #fefefe);
  box-shadow: 0 2px 6px rgba(0, 0, 0, 0.08);
}

.peer__avatar {
  width: 102px;
  height: 104px;
}

.peer__info {
  display: flex;
  flex: 1;
  flex-direction: column;
  min-width: 0;
  margin-left: 26px;
}

.peer__title {
  display: flex;
  align-items: center;
  gap: 14px;
}

.peer__name {
  flex: 1;
  overflow: hidden;
  white-space: nowrap;
  font-size: 46px;
  font-weight: 500;
  line-height: 56px;
  color: #1b1c1e;
  mask-image: linear-gradient(to left, #0003, #000 44px);
}

.peer__status {
  font-size: 37px;
  line-height: 46px;
  color: #858585;
}

/* messages */
.chat {
  position: relative;
  display: flex;
  flex-direction: column;
  align-items: flex-start;
  gap: 18px;
  margin-top: -30px;
  padding: 0 27px;
  mask-image: linear-gradient(to bottom, #0005 0, #0005 110px, #0006 150px, #000a 190px, #000d 225px, #000 280px);
}

.outgoing {
  display: flex;
  align-items: flex-end;
  align-self: flex-end;
  gap: 12px;
  padding: 15px 18px 9px 30px;
  border-radius: 16px 16px 0 42px;
  background: #e3f3c4;
}

.outgoing__command {
  margin: 0 12px 9px 0;
  color: #7fa9b5;
  text-decoration: none;
}

.outgoing__time {
  font-size: 32px;
  line-height: 38px;
  color: #94b487;
}

.incoming {
  display: flex;
  flex-direction: column;
  gap: 10px;
}

.message {
  position: relative;
  display: flex;
  flex-direction: column;
  padding: 18px 31px 9px 30px;
  margin-left: 2px;
  border-radius: 50px 50px 16px 0;
  background: #fff;
  box-shadow: 0 2px 2px rgba(70, 100, 60, 0.4);
}

.message__tail {
  position: absolute;
  left: -15px;
  bottom: 0;
  width: 16px;
  height: 32px;
}

.message__time {
  align-self: flex-end;
  margin-top: 8px;
  font-size: 32px;
  line-height: 38px;
  color: #a5a8ac;
}

.line {
  display: flex;
  align-items: center;
  gap: 10px;
  height: 49px;
  margin: 0;
  white-space: nowrap;
}

.line--title {
  font-weight: 500;
}

.line--gap {
  gap: 0;
  margin-top: 49px;
}

.line--last {
  margin-bottom: 49px;
}

.line b {
  font-weight: 500;
}

.achievements {
  margin: 0;
  padding: 0;
  list-style: none;
}

.emoji {
  width: 49px;
  height: 49px;
}

.reply {
  display: flex;
  align-items: center;
  justify-content: center;
  gap: 10px;
  height: 116px;
  margin-right: 2px;
  border-radius: 18px 18px 42px 42px;
  background: linear-gradient(90deg, #b2b85c 0%, #b1b85c 34%, #9eb060 52%, #7fa463 72%, #649963 96%);
  color: #fff;
  font-size: 40px;
  font-weight: 500;
}

/* message box */
.bottom {
  position: relative;
  margin-top: auto;
  padding: 30px 19px 14px;
}

.composer {
  display: flex;
  align-items: center;
  height: 116px;
  padding: 0 8px 0 21px;
  box-sizing: border-box;
  border-radius: 58px;
  background: rgba(255, 255, 255, 0.84);
  box-shadow: inset 0 0 0 2px rgba(255, 255, 255, 0.8), 0 2px 4px rgba(70, 90, 50, 0.25);
}

.composer__menu {
  display: flex;
  align-items: center;
  gap: 18px;
  height: 84px;
  padding: 0 27px 0 30px;
  border-radius: 42px;
  background: #4b97e8;
  color: #fff;
  font-size: 40px;
  font-weight: 500;
}

.composer__icon {
  display: flex;
  margin: 0 33px;
  background: none;
}

.composer__caret {
  width: 5px;
  height: 63px;
  background: #659bd6;
}

.composer__input {
  flex: 1;
  min-width: 0;
  padding: 0;
  border: none;
  outline: none;
  background: none;
  font: inherit;
  font-size: 46px;
  color: #000;
}

.composer__input::placeholder {
  color: #878a80;
  opacity: 1;
}

.composer__icon:nth-of-type(3) {
  margin-right: 38px;
}

.composer__camera {
  display: flex;
  align-items: center;
  justify-content: center;
  width: 100px;
  height: 100px;
  border-radius: 50%;
  background: #4b97e8;
}

.home {
  width: 378px;
  height: 11px;
  margin: 38px auto 0;
  border-radius: 6px;
  background: rgba(70, 78, 60, 0.55);
}
</style>
